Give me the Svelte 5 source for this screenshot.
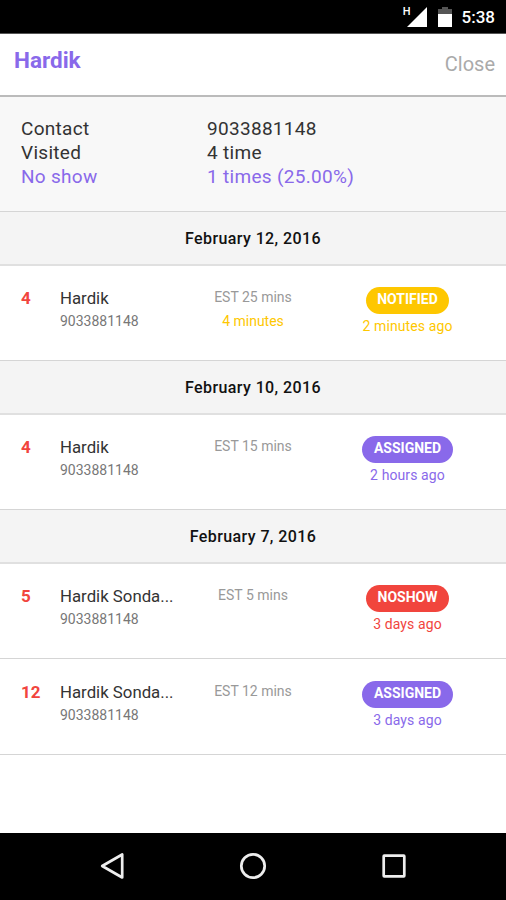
<script lang="ts">
	let customer = {
		name: "Hardik",
		contact: "9033881148",
		visited: "4 time",
		noShow: "1 times (25.00%)"
	}

	let days = [
		{
			date: "February 12, 2016",
			visits: [
				{ people: 4, name: "Hardik", phone: "9033881148", est: "EST 25 mins", wait: "4 minutes", status: "notified", ago: "2 minutes ago" }
			]
		},
		{
			date: "February 10, 2016",
			visits: [
				{ people: 4, name: "Hardik", phone: "9033881148", est: "EST 15 mins", wait: "", status: "assigned", ago: "2 hours ago" }
			]
		},
		{
			date: "February 7, 2016",
			visits: [
				{ people: 5, name: "Hardik Sonda...", phone: "9033881148", est: "EST 5 mins", wait: "", status: "noshow", ago: "3 days ago" },
				{ people: 12, name: "Hardik Sonda...", phone: "9033881148", est: "EST 12 mins", wait: "", status: "assigned", ago: "3 days ago" }
			]
		}
	]
</script>

<div class="screen">
	<div class="status-bar">
		<span class="network">H</span>
		<svg class="signal" width="20" height="20" viewBox="0 0 20 20">
			<path d="M20 0V20H0Z" fill="#fff" />
		</svg>
		<svg class="battery" width="14" height="21" viewBox="0 0 14 21">
			<path d="M0 2H4V0H10V2H14V8H0Z" fill="#555" />
			<path d="M0 7H14V20H0Z" fill="#fff" />
		</svg>
		<span class="clock">5:38</span>
	</div>

	<header>
		<h1>{customer.name}</h1>
		<button>Close</button>
	</header>

	<dl class="summary">
		<dt>Contact</dt>
		<dd>{customer.contact}</dd>
		<dt>Visited</dt>
		<dd>{customer.visited}</dd>
		<dt class="missed">No show</dt>
		<dd class="missed">{customer.noShow}</dd>
	</dl>

	<main>
		{#each days as day}
			<section>
				<h2>{day.date}</h2>
				{#each day.visits as visit}
					<div class="visit {visit.status}">
						<div class="people">{visit.people}</div>
						<div class="guest">
							<div class="name">{visit.name}</div>
							<div class="phone">{visit.phone}</div>
						</div>
						<div class="estimate">
							<div>{visit.est}</div>
							{#if visit.wait}
								<div class="wait">{visit.wait}</div>
							{/if}
						</div>
						<div class="state">
							<span class="badge">{visit.status.toUpperCase()}</span>
							<div class="ago">{visit.ago}</div>
						</div>
					</div>
				{/each}
			</section>
		{/each}
	</main>

	<nav>
		<svg width="26" height="28" viewBox="0 0 26 28">
			<path d="M23.2 2.5V25.5L3.2 14Z" />
		</svg>
		<svg width="28" height="28" viewBox="0 0 28 28">
			<circle cx="14" cy="14" r="11.7" />
		</svg>
		<svg width="26" height="28" viewBox="0 0 26 28">
			<rect x="2.7" y="3.7" width="20.6" height="20.6" rx="0.5" />
		</svg>
	</nav>
</div>

<style>
	:global(body) {
		margin: 0;
	}

	.screen {
		display: flex;
		flex-direction: column;
		height: 900px;
		background: #fff;
		font-family: Roboto, sans-serif;
		color: #333;
		overflow: hidden;
	}

	.status-bar {
		display: flex;
		align-items: flex-start;
		justify-content: flex-end;
		box-sizing: border-box;
		flex: 0 0 34px;
		padding: 7px 11px 0 0;
		border-bottom: 1px solid #555;
		background: #000;
		color: #fff;
	}

	.network {
		margin-right: -4px;
		font-size: 11px;
		line-height: 10px;
		font-weight: 500;
	}

	.battery {
		margin: 0 10px 0 11px;
	}

	.clock {
		font-size: 17px;
		line-height: 21px;
		font-weight: 500;
	}

	header {
		display: flex;
		justify-content: space-between;
		box-sizing: border-box;
		flex: 0 0 63px;
		padding: 0 11px 0 14px;
		border-bottom: 2px solid #bbb;
	}

	h1 {
		margin: 0;
		font-size: 22.5px;
		line-height: 52px;
		font-weight: 700;
		color: #8969ea;
	}

	button {
		padding: 0;
		border: 0;
		background: none;
		font-family: inherit;
		font-size: 20px;
		line-height: 61px;
		color: #aaa;
	}

	.summary {
		display: grid;
		grid-template-columns: 186px 1fr;
		align-content: start;
		box-sizing: border-box;
		flex: 0 0 114px;
		margin: 0;
		padding: 20px 21px 0;
		background: #f8f8f8;
		font-size: 19px;
		line-height: 24px;
		letter-spacing: 0.3px;
	}

	dd {
		margin: 0;
	}

	.missed {
		color: #8969ea;
	}

	main {
		flex: 1;
	}

	h2 {
		box-sizing: border-box;
		height: 55px;
		margin: 0;
		border-top: 1px solid #d5d5d5;
		border-bottom: 2px solid #e0e0e0;
		background: #f4f4f4;
		text-align: center;
		font-size: 16px;
		line-height: 53px;
		font-weight: 500;
		letter-spacing: 0.4px;
		color: #111;
	}

	.visit {
		display: grid;
		grid-template-columns: 39px 117px 152px 157px;
		box-sizing: border-box;
		height: 94px;
		padding: 19px 0 0 21px;
	}

	.visit + .visit {
		height: 96px;
		padding-top: 20px;
		border-top: 1px solid #d5d5d5;
	}

	section:last-child {
		border-bottom: 1px solid #d5d5d5;
	}

	.people {
		font-size: 17px;
		line-height: 26px;
		font-weight: 700;
		color: #f1453d;
	}

	.name {
		font-size: 16.8px;
		line-height: 26px;
		white-space: nowrap;
	}

	.phone {
		font-size: 14px;
		line-height: 21px;
		color: #777;
	}

	.estimate {
		text-align: center;
		font-size: 14px;
		line-height: 24px;
		color: #999;
	}

	.wait {
		color: #fec700;
	}

	.state {
		padding-top: 2px;
		text-align: center;
		color: var(--status-color);
	}

	.badge {
		display: inline-block;
		box-sizing: border-box;
		height: 27px;
		padding: 0 11.5px;
		border-radius: 13.5px;
		background: var(--status-color);
		font-size: 14px;
		line-height: 25px;
		font-weight: 700;
		color: #fff;
		vertical-align: top;
	}

	.ago {
		font-size: 14px;
		line-height: 24px;
		letter-spacing: 0.1px;
	}

	.notified {
		--status-color: #fec700;
	}

	.assigned {
		--status-color: #8969ea;
	}

	.noshow {
		--status-color: #f1453d;
	}

	nav {
		display: flex;
		align-items: center;
		justify-content: center;
		gap: 114px;
		box-sizing: border-box;
		flex: 0 0 67px;
		padding-bottom: 1px;
		background: #000;
	}

	nav svg {
		fill: none;
		stroke: #eee;
		stroke-width: 2.7;
		stroke-linejoin: round;
	}
</style>
